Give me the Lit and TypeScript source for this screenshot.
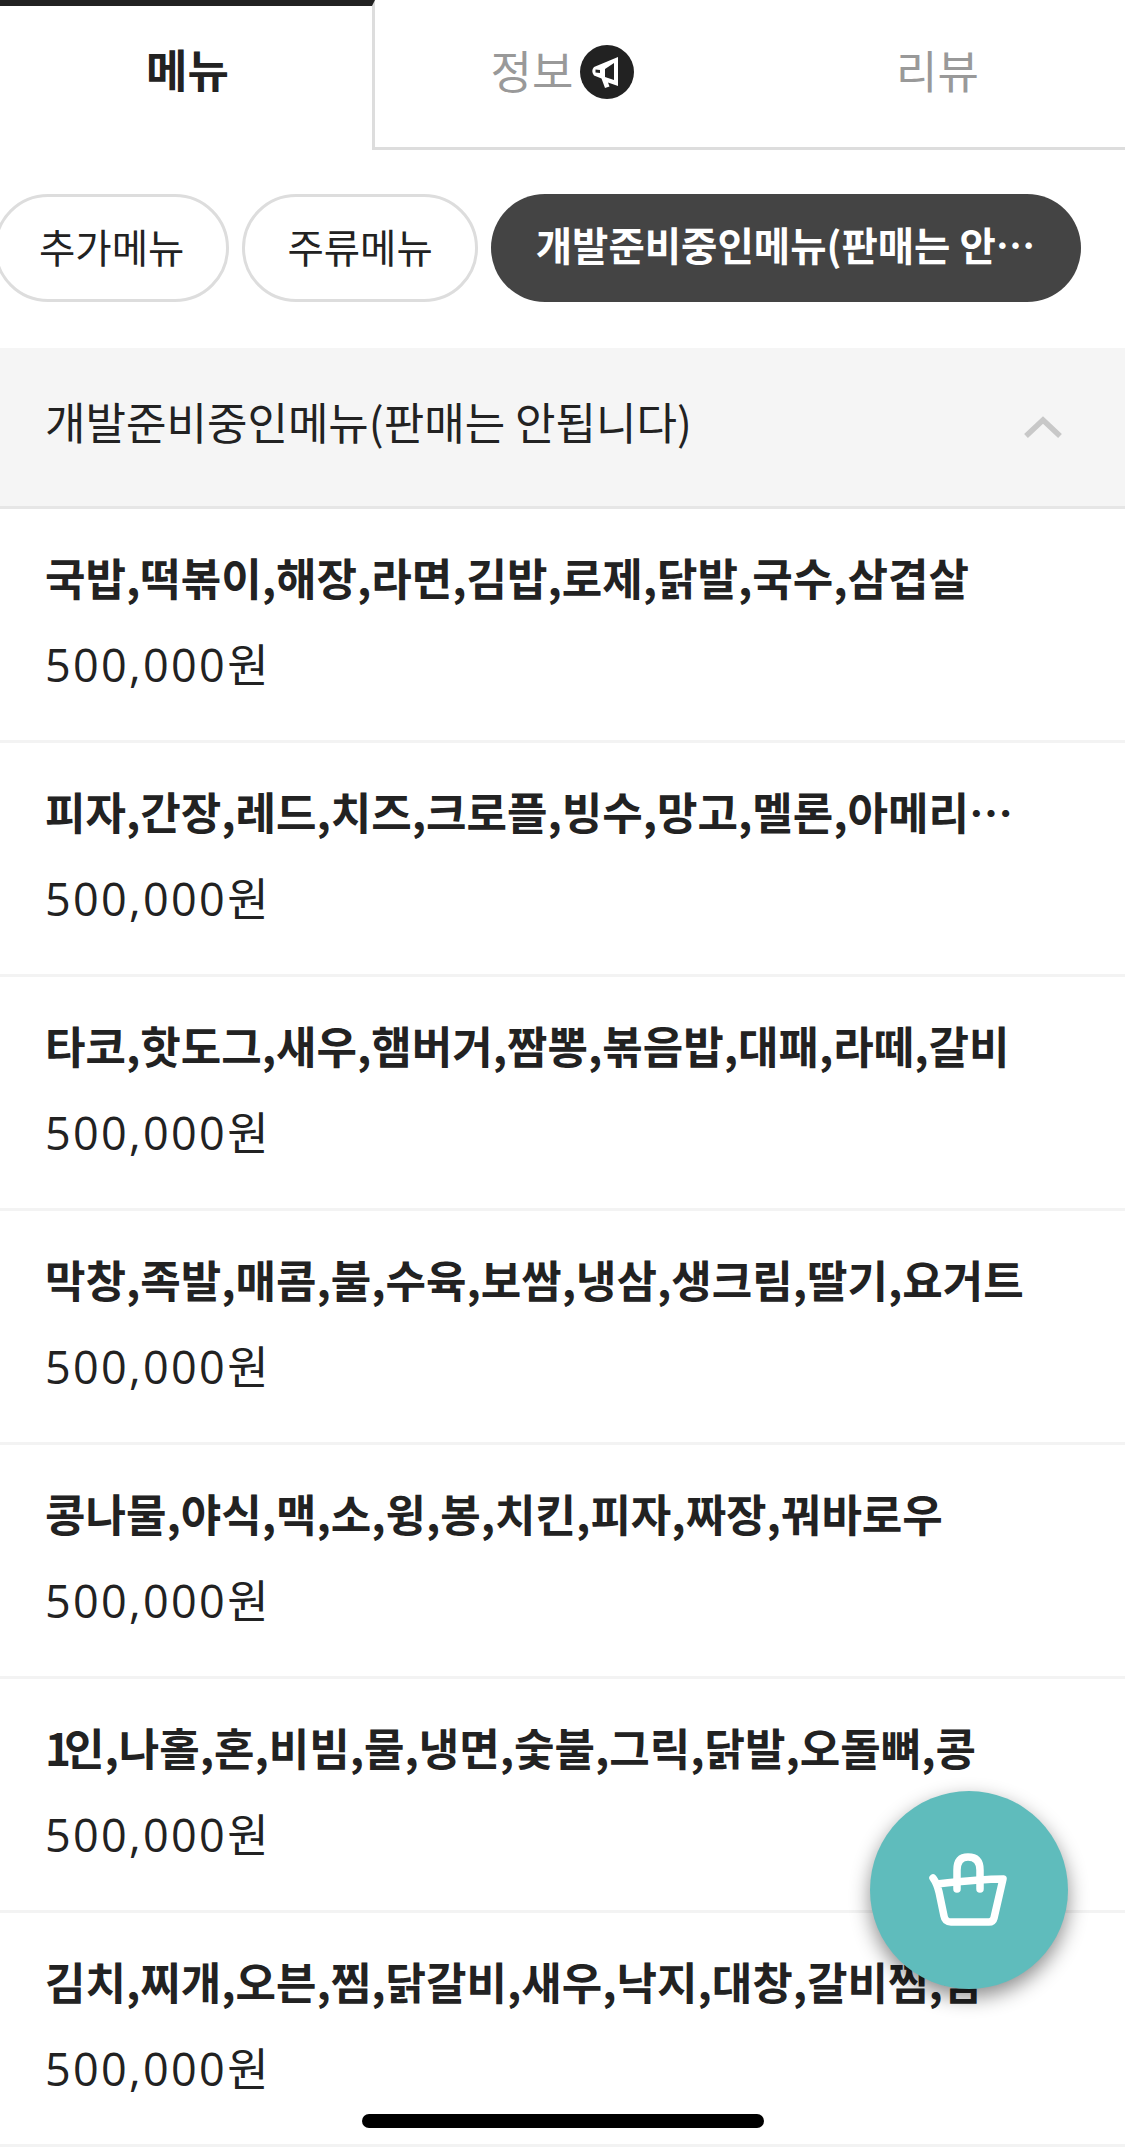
import { LitElement, html, css, svg } from "lit";
import { customElement } from "lit/decorators.js";

const ITEMS = [
  "국밥,떡볶이,해장,라면,김밥,로제,닭발,국수,삼겹살",
  "피자,간장,레드,치즈,크로플,빙수,망고,멜론,아메리카노,모카",
  "타코,핫도그,새우,햄버거,짬뽕,볶음밥,대패,라떼,갈비",
  "막창,족발,매콤,불,수육,보쌈,냉삼,생크림,딸기,요거트",
  "콩나물,야식,맥,소,윙,봉,치킨,피자,짜장,꿔바로우",
  "1인,나홀,혼,비빔,물,냉면,숯불,그릭,닭발,오돌뼈,콩",
  "김치,찌개,오븐,찜,닭갈비,새우,낙지,대창,갈비찜,팜",
];

@customElement("app-root")
export class AppRoot extends LitElement {
  static styles = css`
    :host {
      display: block;
      position: relative;
      width: 1125px;
      height: 2154px;
      overflow: hidden;
      background: #fff;
      font-family: "Noto Sans CJK KR", "Noto Sans", sans-serif;
      color: #222;
    }
    .tabs { display: grid; grid-template-columns: 375px 1fr 1fr; height: 150px; }
    .tab {
      display: flex; align-items: center; justify-content: center; gap: 7px;
      box-sizing: border-box; padding-bottom: 9px;
      font-size: 45px; color: #999;
      border-bottom: 3px solid #ddd;
    }
    .tab.active {
      color: #222; font-weight: 700; border-top: 6px solid #222; border-bottom: none;
      border-right: 3px solid #ddd; padding-bottom: 20px; padding-left: 3px;
    }
    .badge { width: 54px; height: 54px; display: block; margin-top: 5px; }
    .pills { display: flex; gap: 13px; margin: 44px 0 0 -6px; height: 108px; overflow: hidden; }
    .pill {
      box-sizing: border-box; height: 108px; border-radius: 54px; flex: none;
      display: flex; align-items: center; padding: 0 42px 5px;
      border: 3px solid #ddd; background: #fff; font-size: 39.5px; color: #222;
      white-space: nowrap;
    }
    .pill.on {
      width: 590px; padding: 0 45px; display: block; line-height: 100px;
      border: none; background: #444; color: #fff; font-weight: 700;
      overflow: hidden; text-overflow: ellipsis;
    }
    .section {
      box-sizing: border-box; height: 161px; margin-top: 46px; background: #f5f5f5;
      border-bottom: 3px solid #e6e6e6; padding: 0 62px 0 45px;
      display: flex; align-items: center; justify-content: space-between;
      font-size: 44px; color: #222;
    }
    .section span { margin-top: -12px; }
    .chev { width: 40px; height: 22px; display: block; }
    .item {
      box-sizing: border-box; height: 234px; padding: 37px 90px 0 45px;
      border-bottom: 3px solid #f3f3f3;
    }
    .name {
      font-size: 44px; line-height: 62px; font-weight: 700;
      white-space: nowrap; overflow: hidden; text-overflow: ellipsis;
    }
    .lead { letter-spacing: -7px; }
    .price {
      font-family: "Open Sans", "Noto Sans CJK KR", sans-serif;
      font-size: 45px; line-height: 62px; margin-top: 26px; letter-spacing: 2.3px; color: #222;
    }
    .fab {
      position: absolute; left: 870px; top: 1791px; width: 198px; height: 198px;
      border-radius: 50%; background: #5fbcbc; box-shadow: 0 8px 20px rgba(0,0,0,.45);
      display: flex; align-items: center; justify-content: center;
    }
    .fab svg { display: block; width: 84px; height: 84px; }
    .home {
      position: absolute; left: 362px; top: 2114px; width: 402px; height: 14px;
      border-radius: 7px; background: #000;
    }
  `;

  private nameOf(n: string) {
    return n.startsWith("1") ? html`<span class="lead">1</span>${n.slice(1)}` : n;
  }

  render() {
    return html`
      <div class="tabs">
        <div class="tab active">메뉴</div>
        <div class="tab">정보
          <svg class="badge" viewBox="0 0 54 54">
            <circle cx="27" cy="27" r="27" fill="#222"></circle>
            ${svg`<path d="M38 12 V41 L28 37.5 L29.5 41.5 L25 43 L21.5 33.5 L14 30.5 Q10.5 26 14 22 Z M34 18 L25 24 V32 L34 35 Z M15.5 24.5 V27.5 L20 28 V25 Z" fill="#fff" fill-rule="evenodd"></path>`}
          </svg>
        </div>
        <div class="tab">리뷰</div>
      </div>
      <div class="pills">
        <div class="pill">추가메뉴</div>
        <div class="pill">주류메뉴</div>
        <div class="pill on">개발준비중인메뉴(판매는 안됩니다)</div>
      </div>
      <div class="section">
        <span>개발준비중인메뉴(판매는 안됩니다)</span>
        <svg class="chev" viewBox="0 0 40 22"><path d="M3 20 L20 4 L37 20" fill="none" stroke="#c8c8c8" stroke-width="5.5"></path></svg>
      </div>
      ${ITEMS.map((n) => html`<div class="item"><div class="name">${this.nameOf(n)}</div><div class="price">500,000원</div></div>`)}
      <div class="fab">
        <svg viewBox="0 0 84 84" fill="none" stroke="#fff" stroke-width="7.5" stroke-linecap="round" stroke-linejoin="round">
          <path d="M6 30 C9 34 11 40 12 44 L17 68 Q18 74 24 74 H62 Q66 74 67 70 L76 31 Q55 31 10 36"></path>
          <path d="M30 41 V22 Q30 9 41 9 Q53 9 53 22 V41"></path>
        </svg>
      </div>
      <div class="home"></div>
    `;
  }
}
